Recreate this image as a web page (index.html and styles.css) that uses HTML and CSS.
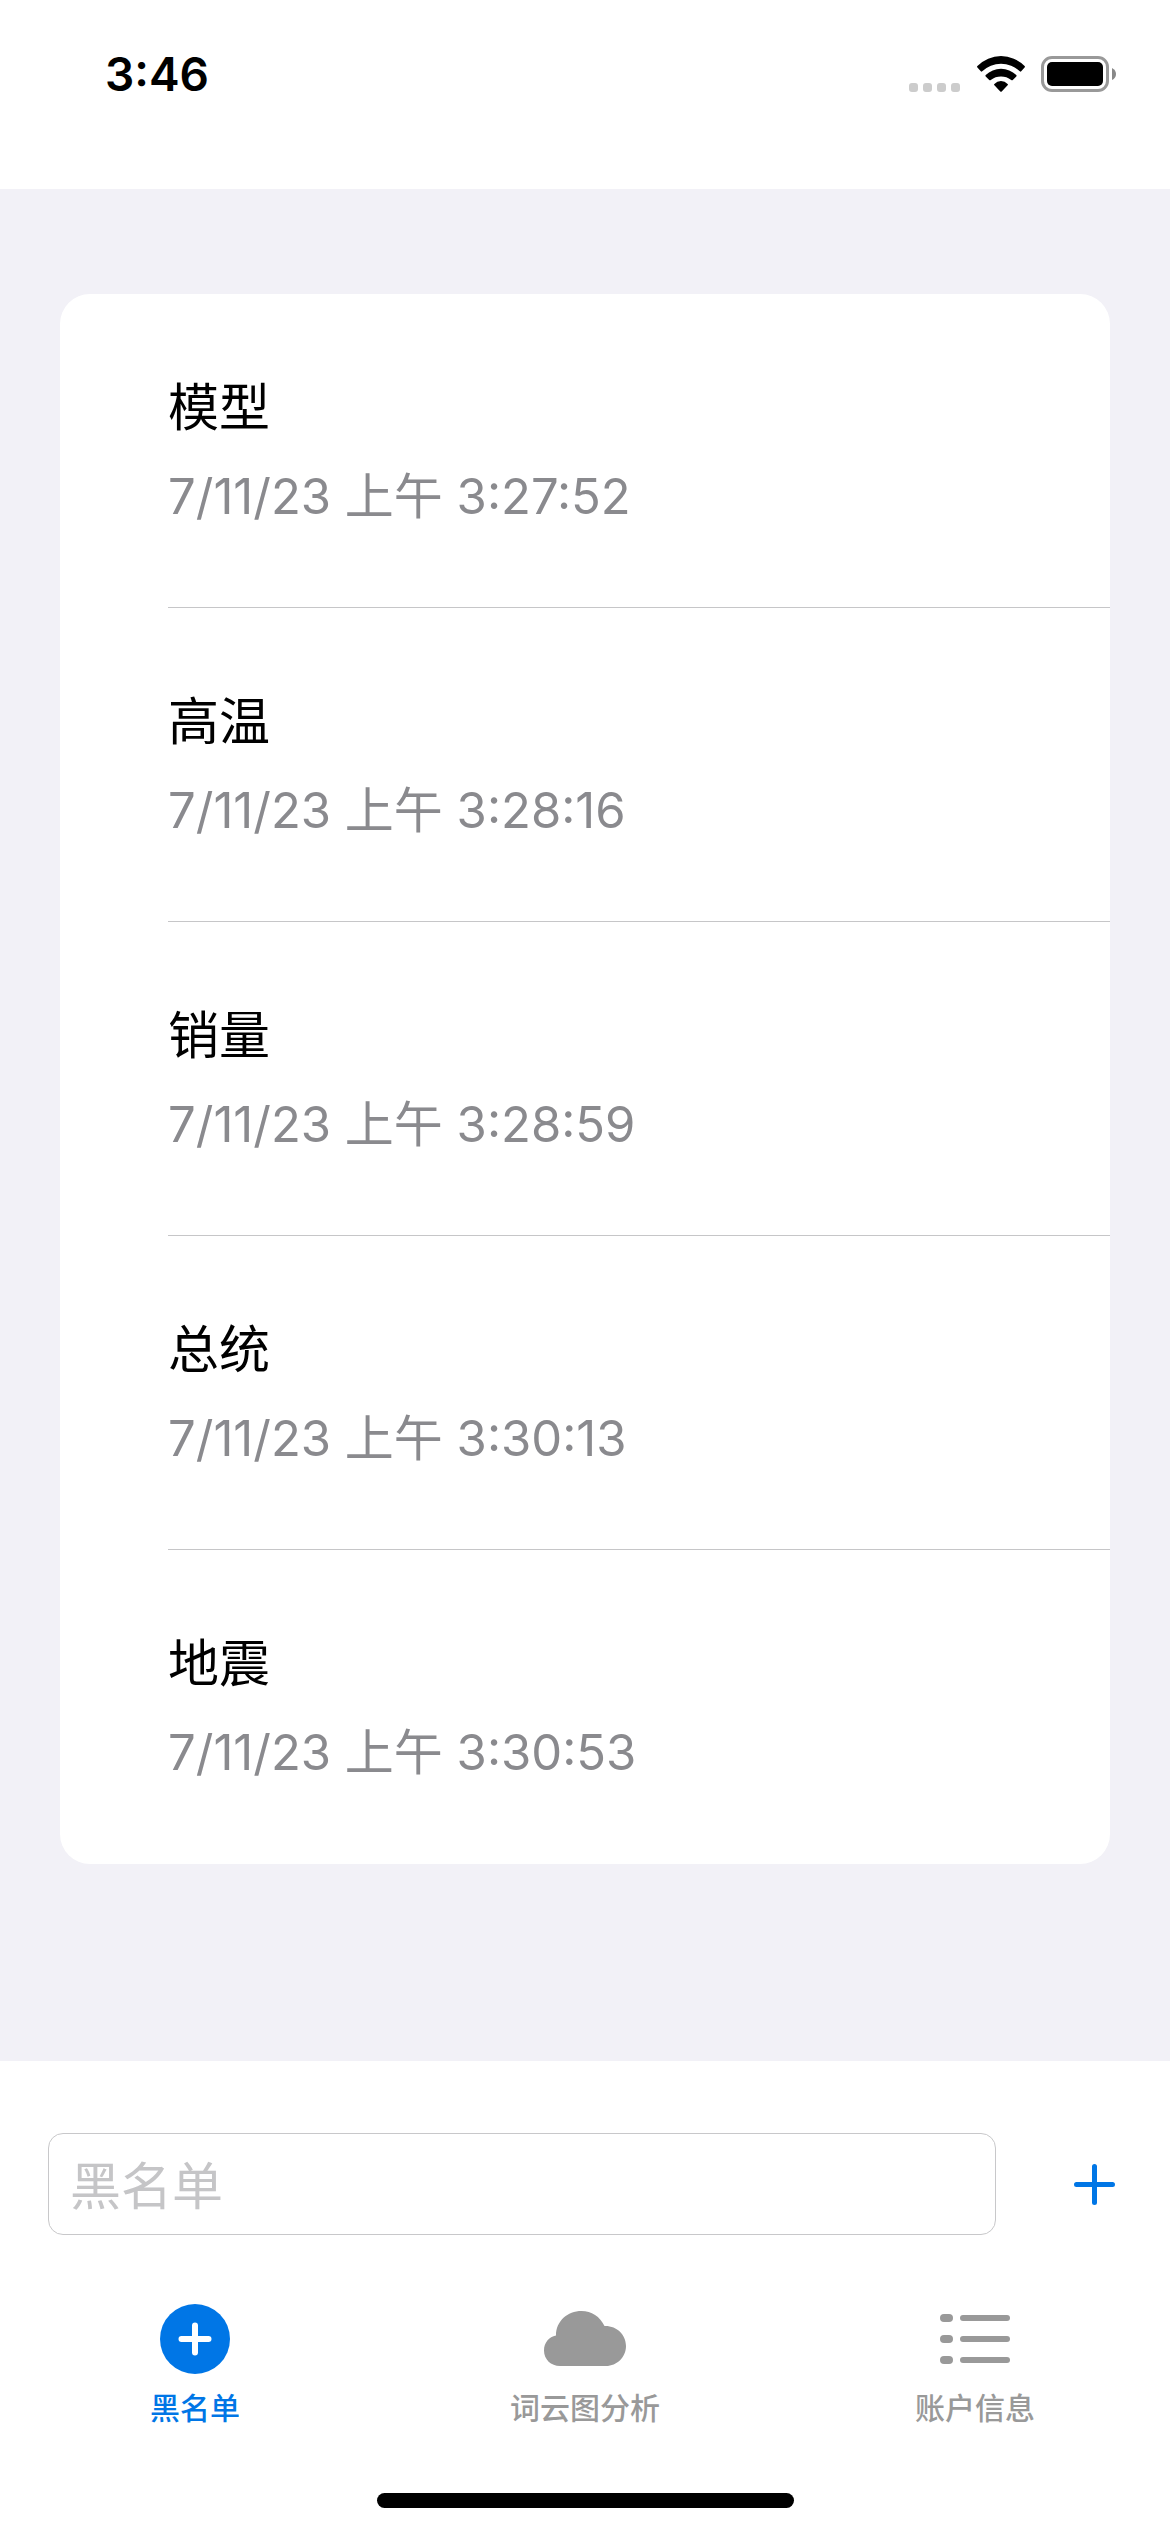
FILE: index.html
```html
<!DOCTYPE html>
<html lang="zh-CN">
<head>
<meta charset="utf-8">
<meta name="viewport" content="width=device-width, initial-scale=1">
<title>黑名单</title>
<link rel="stylesheet" href="styles.css">
</head>
<body>
<header class="status-bar">
  <time class="clock">3:46</time>
  <div class="status-icons">
    <svg width="52" height="36" viewBox="0 0 52 36" fill="#ccc" aria-hidden="true">
      <rect x="0" y="27" width="9" height="9" rx="3"/>
      <rect x="14" y="27" width="9" height="9" rx="3"/>
      <rect x="28" y="27" width="9" height="9" rx="3"/>
      <rect x="42" y="27" width="9" height="9" rx="3"/>
    </svg>
    <svg width="48" height="36" viewBox="0 0 48 36" aria-hidden="true">
      <path d="M.4 10A33 33 0 0 1 47.600 10Q48.300 10.700 47.600 11.400L44.200 15.300Q43.500 16 42.800 15.300A27.300 27.300 0 0 0 5.200 15.300Q4.500 16 3.800 15.300L.4 11.400Q-.3 10.700 .4 10Z"/>
      <path d="M8.700 19A22 22 0 0 1 39.300 19Q40 19.700 39.300 20.400L35.800 24Q35 24.600 34.200 24A17 17 0 0 0 13.800 24Q13 24.600 12.200 24L8.700 20.400Q8 19.700 8.700 19Z"/>
      <path d="M17.400 28A9 9 0 0 1 30.600 28Q31.300 28.600 30.600 29.300L24.700 35.500Q24 36.200 23.300 35.500L17.400 29.300Q16.700 28.600 17.400 28Z"/>
    </svg>
    <svg width="75" height="36" viewBox="0 0 75 36" aria-hidden="true">
      <rect x="1.500" y="1.500" width="65" height="33" rx="9.500" fill="none" stroke="#999" stroke-width="3"/>
      <rect x="6" y="6" width="56" height="24" rx="5"/>
      <path d="M71 12Q75 14 75 18T71 24Z" fill="#888"/>
    </svg>
  </div>
</header>

<main class="content">
  <ul class="card">
    <li class="entry"><div class="entry-body"><span class="word">模型</span><time class="date">7/11/23 上午 3:27:52</time></div></li>
    <li class="entry"><div class="entry-body"><span class="word">高温</span><time class="date">7/11/23 上午 3:28:16</time></div></li>
    <li class="entry"><div class="entry-body"><span class="word">销量</span><time class="date">7/11/23 上午 3:28:59</time></div></li>
    <li class="entry"><div class="entry-body"><span class="word">总统</span><time class="date">7/11/23 上午 3:30:13</time></div></li>
    <li class="entry"><div class="entry-body"><span class="word">地震</span><time class="date">7/11/23 上午 3:30:53</time></div></li>
  </ul>
</main>

<form class="add-form">
  <input class="word-input" type="text" placeholder="黑名单" aria-label="黑名单">
  <button class="add-button" type="button" aria-label="添加">
    <svg width="41" height="41" viewBox="0 0 41 41" fill="none" stroke="currentColor" stroke-width="5" stroke-linecap="round" aria-hidden="true"><path d="M20.500 2.500V38.500M2.500 20.500H38.500"/></svg>
  </button>
</form>

<nav class="tabs">
  <a class="tab active" href="#blacklist" aria-current="page">
    <svg class="tab-icon" width="72" height="72" viewBox="0 0 72 72" aria-hidden="true">
      <circle cx="36" cy="36" r="35" fill="currentColor"/>
      <path d="M36 22.500V49.500M22.500 36H49.500" stroke="#fff" stroke-width="6" stroke-linecap="round"/>
    </svg>
    <span>黑名单</span>
  </a>
  <a class="tab" href="#cloud">
    <svg class="tab-icon" width="82" height="72" viewBox="0 -8 82 72" fill="currentColor" aria-hidden="true">
      <path d="M16 55C7 55 0 48.500 0 39.500C0 31.500 5 26 12 24.500C12 10 23.500 0 37.500 0C47.500 0 56 5.500 60.500 15C72.500 14.500 82 23.500 82 35C82 46 73 55 62 55Z"/>
    </svg>
    <span>词云图分析</span>
  </a>
  <a class="tab" href="#account">
    <svg class="tab-icon" width="70" height="72" viewBox="0 0 70 72" fill="currentColor" aria-hidden="true">
      <rect x="0" y="11" width="13" height="8" rx="4"/><rect x="20" y="12" width="50" height="6" rx="3"/>
      <rect x="0" y="32" width="13" height="8" rx="4"/><rect x="20" y="33" width="50" height="6" rx="3"/>
      <rect x="0" y="53" width="13" height="8" rx="4"/><rect x="20" y="54" width="50" height="6" rx="3"/>
    </svg>
    <span>账户信息</span>
  </a>
</nav>
<div class="home-indicator"></div>
</body>
</html>
```

FILE: styles.css
```css
* {
  box-sizing: border-box;
}

body {
  margin: 0;
  min-height: 100vh;
  display: flex;
  flex-direction: column;
  background: #fff;
  color: #000;
  font-family: Inter, "Noto Sans CJK SC", sans-serif;
  font-size: 51px;
  line-height: 61px;
}

.status-bar {
  display: flex;
  justify-content: space-between;
  align-items: flex-start;
  height: 189px;
  padding: 44px 54px 0 105px;
}

.clock {
  font-size: 46px;
  font-weight: 600;
}

.status-icons {
  display: flex;
  gap: 16px;
  padding-top: 12px;
}

.content {
  flex: 1;
  padding: 105px 60px;
  background: #f2f1f7;
}

.card {
  margin: 0;
  padding: 0;
  list-style: none;
  background: #fff;
  border-radius: 30px;
  overflow: hidden;
}

.entry {
  padding-left: 108px;
}

.entry-body {
  display: flex;
  flex-direction: column;
  gap: 28px;
  padding: 83px 0 80px;
  border-bottom: 1px solid #c6c6c8;
}

.entry:last-child .entry-body {
  border-bottom-color: transparent;
}

.date {
  color: #8a8a8e;
  font-size: 49px;
}

.add-form {
  display: flex;
  align-items: center;
  gap: 48px;
  padding: 72px 48px 48px;
}

.word-input {
  flex: 1;
  min-width: 0;
  height: 102px;
  padding: 4px 21px 0;
  border: 1px solid #c8c8ca;
  border-radius: 15px;
  background: #fff;
  font: inherit;
  color: inherit;
}

.word-input::placeholder {
  color: #c5c5c7;
  opacity: 1;
}

.add-button {
  display: flex;
  justify-content: center;
  align-items: center;
  width: 78px;
  height: 78px;
  margin: 0;
  padding: 0 0 0 22px;
  border: 0;
  background: none;
  color: #0076e6;
}

.tabs {
  display: grid;
  grid-template-columns: repeat(3, 1fr);
  padding-top: 20px;
}

.tab {
  display: flex;
  flex-direction: column;
  align-items: center;
  gap: 15px;
  color: #999;
  text-decoration: none;
  font-size: 30px;
  font-weight: 500;
  line-height: 36px;
}

.tab.active {
  color: #0076e6;
}

.home-indicator {
  width: 417px;
  height: 15px;
  margin: 67px auto 24px;
  border-radius: 8px;
  background: #000;
}
```
